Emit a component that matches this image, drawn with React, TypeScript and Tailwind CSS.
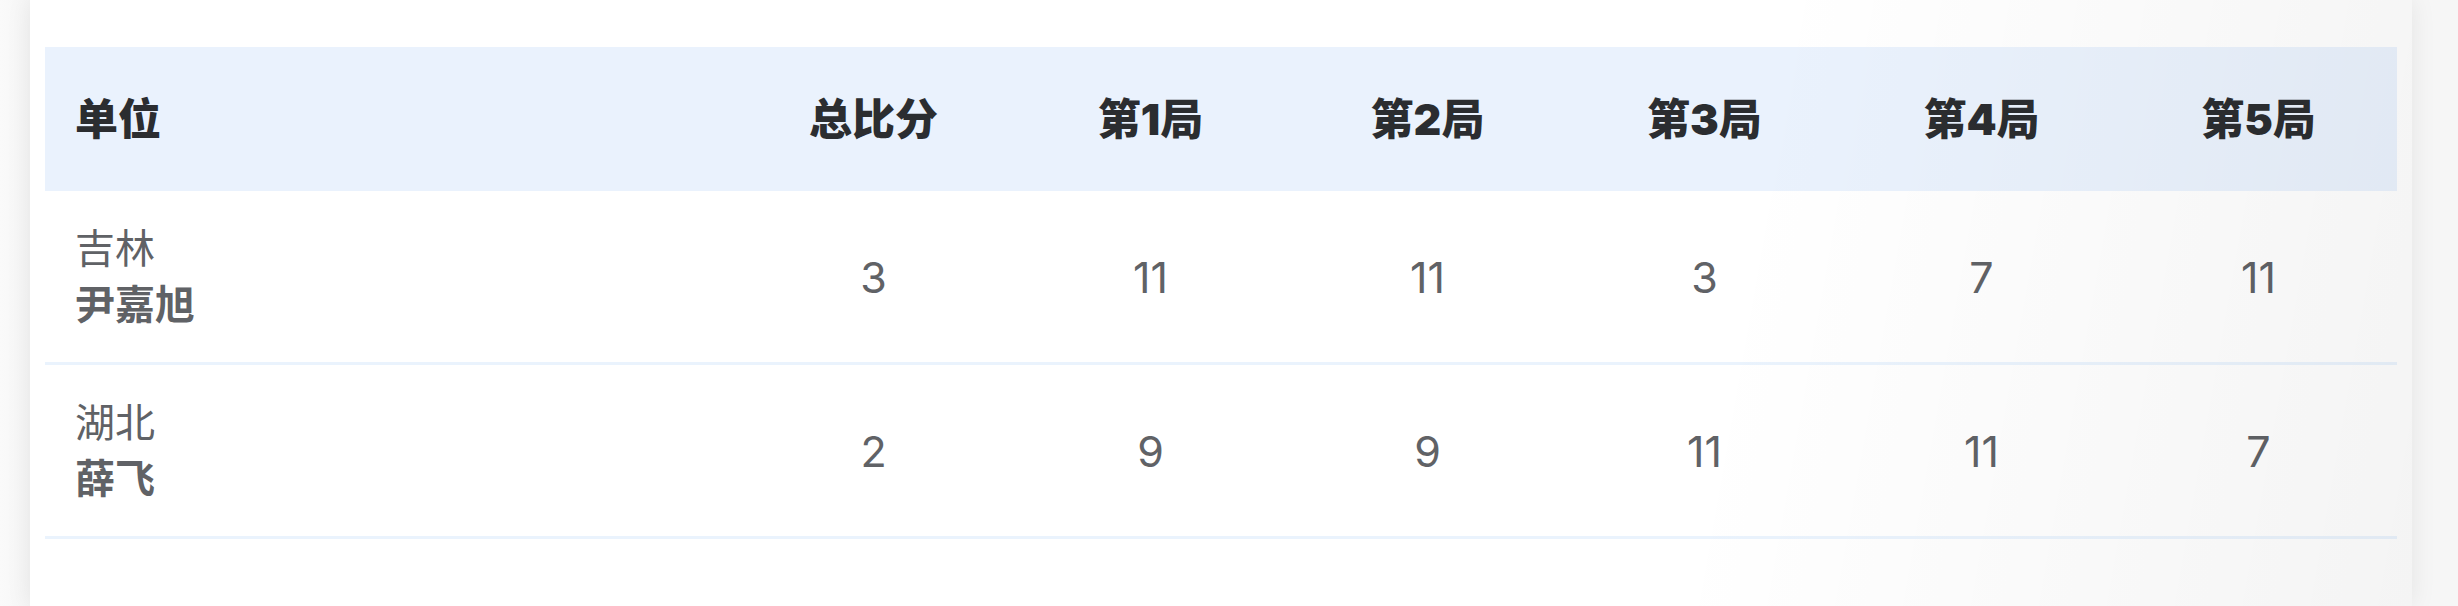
const rows = [
  { unit: "吉林", name: "尹嘉旭", scores: [3, 11, 11, 3, 7, 11] },
  { unit: "湖北", name: "薛飞", scores: [2, 9, 9, 11, 11, 7] },
];

const headers = ["总比分", "第1局", "第2局", "第3局", "第4局", "第5局"];

export default function App() {
  return (
    <div className="h-[606px] overflow-hidden bg-[linear-gradient(90deg,#fafafa,#f6f6f6_30px,#f6f6f6)] pl-[30px] pr-[46px] font-[family-name:Inter,'Noto_Sans_CJK_SC',sans-serif]">
      <div className="relative h-full bg-white px-[15px] pt-[47px] shadow-[0_0_24px_rgba(0,0,0,0.08)]">
        {/* header */}
        <div className="grid h-[144px] grid-cols-[1fr_repeat(6,277px)] items-center bg-[#eaf2fd] text-[43px] leading-[60px] font-black text-[#2b2d30]">
          <div className="pl-[30px]">单位</div>
          {headers.map((h) => (
            <div key={h} className="text-center">
              {h}
            </div>
          ))}
        </div>

        {rows.map((r) => (
          <div
            key={r.unit}
            className="grid grid-cols-[1fr_repeat(6,277px)] items-center border-b-[3px] border-[#eaf3fd] py-[29.5px] text-[40px] leading-[56px] text-[#606266]"
          >
            <div className="pl-[30px]">
              <div>{r.unit}</div>
              <div className="font-bold">{r.name}</div>
            </div>
            {r.scores.map((s, i) => (
              <div key={i} className="text-center text-[43px]">
                {s}
              </div>
            ))}
          </div>
        ))}

        {/* soft shading on the right side */}
        <div className="pointer-events-none absolute inset-0 bg-[linear-gradient(100deg,transparent_70%,rgba(0,0,0,0.045))]" />
      </div>
    </div>
  );
}
